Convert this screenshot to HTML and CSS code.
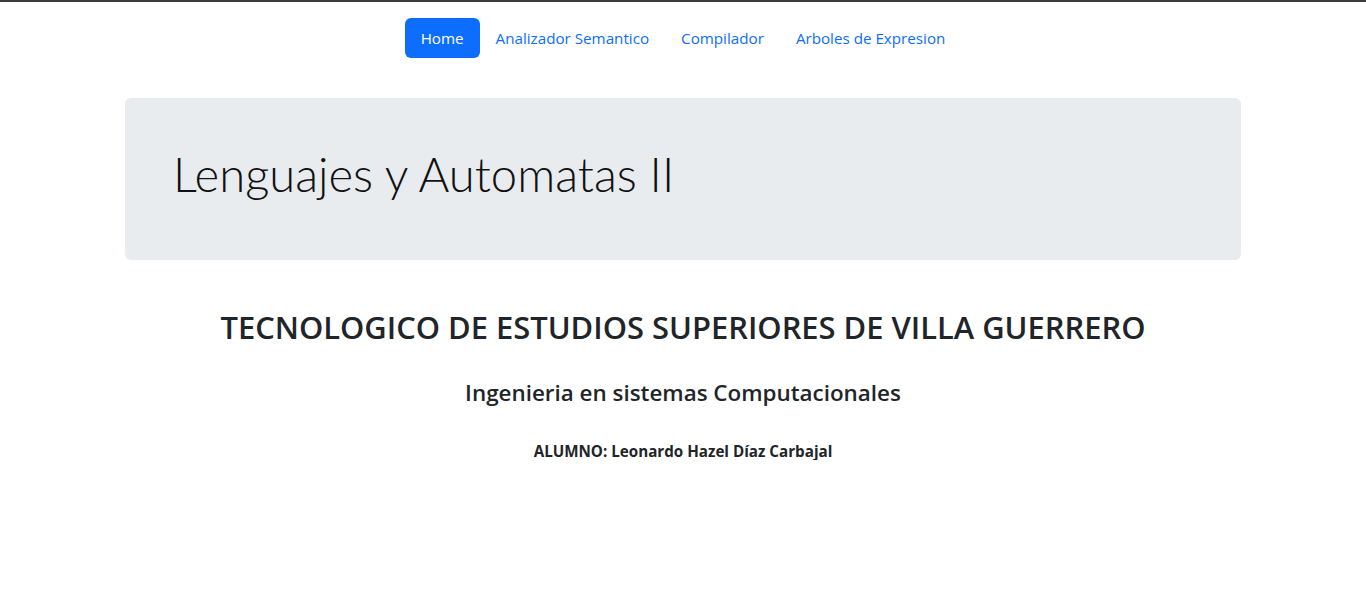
FILE: index.html
```html
<!DOCTYPE html>
<html lang="es">
<head>
<meta charset="utf-8">
<title>Lenguajes y Automatas II</title>
<link rel="stylesheet" href="styles.css">
</head>
<body>
<div class="topline"></div>
<div class="container">
  <nav class="nav">
    <a class="nav-link active" href="#">Home</a>
    <a class="nav-link" href="#">Analizador Semantico</a>
    <a class="nav-link" href="#">Compilador</a>
    <a class="nav-link" href="#">Arboles de Expresion</a>
  </nav>
  <div class="jumbo">
    <h1 class="display">Lenguajes y Automatas II</h1>
  </div>
  <div class="info">
    <h2 class="school">TECNOLOGICO DE ESTUDIOS SUPERIORES DE VILLA GUERRERO</h2>
    <h4 class="career">Ingenieria en sistemas Computacionales</h4>
    <h6 class="student">ALUMNO: Leonardo Hazel Díaz Carbajal</h6>
  </div>
</div>
</body>
</html>
```
FILE: styles.css
```css
* { box-sizing: border-box; }
html, body { margin: 0; padding: 0; }
body {
  font-family: "Open Sans", "Noto Sans", sans-serif;
  font-size: 16px;
  line-height: 1.5;
  color: #212529;
  background: #fff;
}
.topline {
  height: 2px;
  background: #3c3c3c;
}
.container {
  max-width: 1140px;
  margin: 0 auto;
  padding: 0 12px;
}
.nav {
  display: flex;
  justify-content: center;
  padding-top: 16px;
}
.nav-link {
  display: block;
  padding: 8px 16px;
  font-size: 15.2px;
  line-height: 24px;
  color: #0d6efd;
  text-decoration: none;
  border-radius: 6px;
}
.nav-link.active {
  background: #0d6efd;
  color: #fff;
}
.jumbo {
  margin-top: 40px;
  background: #e9ecef;
  border-radius: 6px;
  padding: 47px 48px 57px;
}
.display {
  margin: 0;
  font-family: "Lato", "Open Sans", sans-serif;
  font-size: 47.2px;
  font-weight: 300;
  line-height: 58px;
  color: #111;
}
.info {
  text-align: center;
  padding-top: 48px;
}
.school {
  margin: 0 0 34px;
  font-size: 30.9px;
  font-weight: 600;
  line-height: 38px;
}
.career {
  margin: 0 0 36px;
  font-size: 22.4px;
  font-weight: 600;
  line-height: 26px;
}
.student {
  margin: 0;
  font-size: 15.2px;
  font-weight: 700;
  line-height: 18px;
}
```
